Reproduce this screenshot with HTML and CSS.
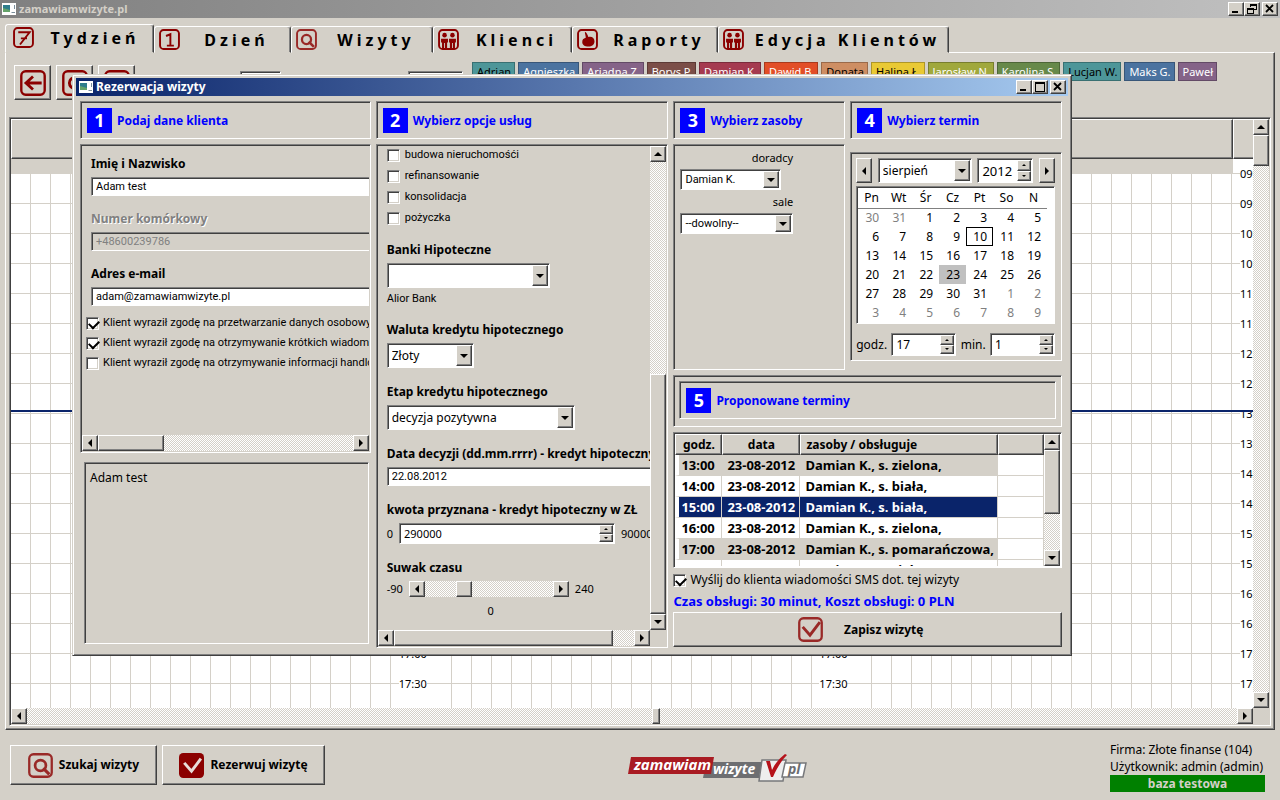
FILE: index.html
```html
<!DOCTYPE html>
<html lang="pl">
<head>
<meta charset="utf-8">
<title>zamawiamwizyte.pl</title>
<link rel="stylesheet" href="styles.css">
</head>
<body>
<svg class="defs" aria-hidden="true">
  <symbol id="frame" viewBox="0 0 24 24"><rect x="1.2" y="1.2" width="21.6" height="21.6" rx="4" fill="none" stroke="currentColor" stroke-width="2.2"/></symbol>
  <symbol id="seven" viewBox="0 0 24 24"><use href="#frame"/><path d="M6 6h13L8 20M9 13h7" fill="none" stroke="currentColor" stroke-width="2.2"/></symbol>
  <symbol id="one" viewBox="0 0 24 24"><use href="#frame"/><path d="M8 8l5-2v13M9 19h8" fill="none" stroke="currentColor" stroke-width="2.2"/></symbol>
  <symbol id="lens" viewBox="0 0 24 24"><use href="#frame"/><circle cx="12" cy="12" r="5.2" fill="none" stroke="currentColor" stroke-width="2.6"/><path d="M14.5 14.5l6 6" stroke="currentColor" stroke-width="3"/></symbol>
  <symbol id="people" viewBox="0 0 24 24"><use href="#frame"/><g fill="currentColor"><circle cx="7.500" cy="7" r="2.600"/><circle cx="16.500" cy="7" r="2.600"/><path d="M3.500 11h7.900v4.500h-1V22H8v-6H7v6H4.600v-6.500H3.500zM12.600 11h7.900v4.500h-1.100V22H17v-6h-1v6h-2.400v-6.500h-1z"/></g></symbol>
  <symbol id="hand" viewBox="0 0 24 24"><use href="#frame"/><path d="M9 3c2 1 3 3 4 6 4-1 7 1 7 5s-3 6-7 6-7-2-7-5 1-4 4-5c0-3-1-4-1-7z" fill="currentColor"/></symbol>
  <symbol id="back" viewBox="0 0 24 24"><use href="#frame"/><path d="M20 12H6M12 6l-6.5 6 6.5 6" fill="none" stroke="currentColor" stroke-width="2.6"/></symbol>
  <symbol id="tick" viewBox="0 0 24 24"><use href="#frame"/><path d="M4.5 9.5l7 8L21 5" fill="none" stroke="currentColor" stroke-width="2.8"/></symbol>
  <symbol id="tickfill" viewBox="0 0 24 24"><rect width="24" height="24" rx="4" fill="currentColor"/><path d="M5 9.5l7 8L21 5.5" fill="none" stroke="#e8dcd8" stroke-width="2.8"/></symbol>
  <symbol id="app" viewBox="0 0 14 12"><rect width="14" height="12" fill="#fff"/><rect x="1" y="2" width="7" height="7" fill="#2e7d8c"/><path d="M1 9V5l7 2v2z" fill="#65a36a"/><path d="M9.5 9.5h3.500M12.500 2v4" stroke="#7b8f9c"/></symbol>
  <symbol id="left" viewBox="0 0 8 8"><path d="M6 0v8L2 4z"/></symbol>
  <symbol id="right" viewBox="0 0 8 8"><path d="M2 0v8l4-4z"/></symbol>
  <symbol id="up" viewBox="0 0 8 8"><path d="M0 6h8L4 2z"/></symbol>
  <symbol id="down" viewBox="0 0 8 8"><path d="M0 2h8L4 6z"/></symbol>
  <symbol id="min" viewBox="0 0 10 10"><path d="M1 7h6v2H1z"/></symbol>
  <symbol id="max" viewBox="0 0 10 10"><path d="M0 0h10v10H0zM1 2v7h8V2z" fill-rule="evenodd"/></symbol>
  <symbol id="restore" viewBox="0 0 10 10"><path d="M3 0h7v6H7V5h2V2H4v1H3zM0 4h7v6H0zM1 6v3h5V6z" fill-rule="evenodd"/></symbol>
  <symbol id="close" viewBox="0 0 10 10"><path d="M1 1l7 7M8 1L1 8" stroke="#000" stroke-width="1.8"/></symbol>
</svg>

<header class="titlebar titlebar-off">
  <svg class="app-icon"><use href="#app"/></svg><span class="title">zamawiamwizyte.pl</span>
  <span class="winbtns">
    <button class="raised wb" aria-label="Minimalizuj"><svg><use href="#min"/></svg></button><button class="raised wb" aria-label="Przywróć"><svg><use href="#restore"/></svg></button>
    <button class="raised wb wb-close" aria-label="Zamknij"><svg><use href="#close"/></svg></button>
  </span>
</header>

<nav class="tabs">
  <button class="tab tab-on"><svg><use href="#seven"/></svg><span>Tydzień</span></button>
  <button class="tab tab-b"><svg><use href="#one"/></svg><span>Dzień</span></button>
  <button class="tab tab-c"><svg class="soft"><use href="#lens"/></svg><span>Wizyty</span></button>
  <button class="tab tab-d"><svg><use href="#people"/></svg><span>Klienci</span></button>
  <button class="tab tab-e"><svg><use href="#hand"/></svg><span>Raporty</span></button>
  <button class="tab tab-f"><svg><use href="#people"/></svg><span>Edycja Klientów</span></button>
</nav>

<main class="page">
  <div class="toolbar">
    <button class="raised tool" aria-label="Wstecz"><svg><use href="#back"/></svg></button>
    <button class="raised tool" aria-label="Szukaj"><svg><use href="#lens"/></svg></button>
    <button class="raised tool" aria-label="Zatwierdź"><svg><use href="#tick"/></svg></button>
    <input class="sunken field tool-a" aria-label="Tydzień"><input class="sunken field tool-b" aria-label="Rok">
    <div class="chips">
      <span class="chip teal">Adrian</span><span class="chip blue">Agnieszka</span><span class="chip violet">Ariadna Z.</span><span class="chip brown">Borys P.</span><span class="chip wine">Damian K.</span><span class="chip orange">Dawid B.</span><span class="chip tan">Donata</span><span class="chip yellow">Halina Ł.</span><span class="chip olive">Jarosław N.</span><span class="chip green">Karolina S.</span><span class="chip teal">Lucjan W.</span><span class="chip blue">Maks G.</span><span class="chip violet">Paweł</span>
    </div>
  </div>
  <section class="sunken planner">
    <div class="planner-view">
      <div class="days">
        <div class="day"><div class="day-head"></div><div class="strip"></div><div class="cells"></div></div>
        <div class="times"><div class="day-head"></div><ul class="hours" data-times></ul></div>
        <div class="day"><div class="day-head"></div><div class="strip"></div><div class="cells"></div></div>
        <div class="times"><div class="day-head"></div><ul class="hours" data-times></ul></div>
        <div class="day"><div class="day-head"></div><div class="strip"></div><div class="cells"></div></div>
        <div class="times times-last"><div class="day-head"></div><ul class="hours" data-times></ul></div>
        <div class="now"></div>
      </div>
      <div class="vbar"><button class="raised sb" aria-label="W górę"><svg><use href="#up"/></svg></button><div class="raised thumb-main"></div><div class="grow"></div><button class="raised sb" aria-label="W dół"><svg><use href="#down"/></svg></button></div>
    </div>
    <div class="hrow"><div class="hbar"><button class="raised sb" aria-label="W lewo"><svg><use href="#left"/></svg></button><div class="before"></div><div class="raised thumb-slim"></div><div class="after"></div><button class="raised sb" aria-label="W prawo"><svg><use href="#right"/></svg></button></div><div class="corner"></div></div>
  </section>
</main>

<footer class="footer">
  <button class="raised big"><svg class="soft"><use href="#lens"/></svg>Szukaj wizyty</button>
  <button class="raised big big-wide"><svg><use href="#tickfill"/></svg>Rezerwuj wizytę</button>
  <svg class="logo" viewBox="0 0 180 30" role="img" aria-label="zamawiamwizyte.pl">
    <path d="M78 8h56l-3 16H75z" fill="#6d6e71"/>
    <path d="M3 3h83l-3 17H0z" fill="#a91b22"/>
    <text x="6" y="16" fill="#fff" font-size="15">zamawiam</text>
    <text x="85" y="20" fill="#fff" font-size="14">wizyte</text>
    <path d="M134 6h24l-3 21h-24z" fill="#eee" stroke="#77787b" stroke-width="1.5"/>
    <path d="M157 9h21l-3 14h-21z" fill="#fff" stroke="#77787b" stroke-width="1.5"/>
    <path d="M138 7h4l2 9C147 9 152 4 157 0l2 1c-6 6-10 13-14 22h-2z" fill="#b5121b"/>
    <text x="160" y="20" fill="#6d6e71" font-size="14">pl</text>
  </svg>
  <div class="account"><div>Firma: Złote finanse (104)</div><div>Użytkownik: admin (admin)</div><strong>baza testowa</strong></div>
</footer>

<div class="dialog" role="dialog" aria-labelledby="dlg-title">
  <div class="titlebar">
    <svg class="app-icon"><use href="#app"/></svg><span class="title" id="dlg-title">Rezerwacja wizyty</span>
    <span class="winbtns">
      <button class="raised wb" aria-label="Minimalizuj"><svg><use href="#min"/></svg></button><button class="raised wb" aria-label="Maksymalizuj"><svg><use href="#max"/></svg></button>
      <button class="raised wb wb-close" aria-label="Zamknij"><svg><use href="#close"/></svg></button>
    </span>
  </div>
  <div class="dialog-body">
    <div class="col col-client">
      <h2 class="sunken step"><span class="num">1</span>Podaj dane klienta</h2>
      <section class="sunken client">
        <div class="clip client-form">
          <div class="group"><label class="cap" for="name">Imię i Nazwisko</label><input class="sunken field long" id="name" value="Adam test"></div>
          <div class="group off"><label class="cap" for="phone">Numer komórkowy</label><input class="sunken field long" id="phone" value="+48600239786" disabled></div>
          <div class="group"><label class="cap" for="mail">Adres e-mail</label><input class="sunken field long" id="mail" value="adam@zamawiamwizyte.pl"></div>
          <div class="consents">
            <label class="check"><input type="checkbox" checked>Klient wyraził zgodę na przetwarzanie danych osobowych</label>
            <label class="check"><input type="checkbox" checked>Klient wyraził zgodę na otrzymywanie krótkich wiadomości</label>
            <label class="check"><input type="checkbox">Klient wyraził zgodę na otrzymywanie informacji handlowych</label>
          </div>
        </div>
        <div class="hbar"><button class="raised sb" aria-label="W lewo"><svg><use href="#left"/></svg></button><div class="raised thumb-client"></div><div class="grow"></div><button class="raised sb" aria-label="W prawo"><svg><use href="#right"/></svg></button></div>
      </section>
      <div class="sunken summary">Adam test</div>
    </div>

    <div class="col col-service">
      <h2 class="sunken step"><span class="num">2</span>Wybierz opcje usług</h2>
      <section class="sunken service">
        <div class="service-top">
          <div class="clip options">
            <div class="kinds">
              <label class="check"><input type="checkbox">budowa nieruchomośći</label>
              <label class="check"><input type="checkbox">refinansowanie</label>
              <label class="check"><input type="checkbox">konsolidacja</label>
              <label class="check"><input type="checkbox">pożyczka</label>
            </div>
            <div class="group"><label class="cap" for="bank">Banki Hipoteczne</label><span class="sunken combo tall w-bank"><select id="bank"><option></option></select><span class="raised arrow"><svg><use href="#down"/></svg></span></span><span class="small">Alior Bank</span></div>
            <div class="group"><label class="cap" for="cur">Waluta kredytu hipotecznego</label><span class="sunken combo tall w-cur"><select id="cur"><option>Złoty</option></select><span class="raised arrow"><svg><use href="#down"/></svg></span></span></div>
            <div class="group"><label class="cap" for="stage">Etap kredytu hipotecznego</label><span class="sunken combo tall w-stage"><select id="stage"><option>decyzja pozytywna</option></select><span class="raised arrow"><svg><use href="#down"/></svg></span></span></div>
            <div class="group"><label class="cap" for="date">Data decyzji (dd.mm.rrrr) - kredyt hipoteczny</label><input class="sunken field long" id="date" value="22.08.2012"></div>
            <div class="group"><label class="cap" for="amount">kwota przyznana - kredyt hipoteczny w ZŁ</label>
              <div class="range"><span>0</span><span class="sunken spin w-amount"><input id="amount" value="290000"><span class="steps"><button class="raised" aria-label="Więcej"><svg><use href="#up"/></svg></button><button class="raised" aria-label="Mniej"><svg><use href="#down"/></svg></button></span></span><span>9000000</span></div></div>
            <div class="group"><span class="cap">Suwak czasu</span>
              <div class="range"><span>-90</span><div class="hbar slider"><button class="raised sb" aria-label="Wcześniej"><svg><use href="#left"/></svg></button><div class="slide-a"></div><div class="raised slide-thumb"></div><div class="grow"></div><button class="raised sb" aria-label="Później"><svg><use href="#right"/></svg></button></div><span>240</span></div>
              <output class="zero">0</output></div>
          </div>
          <div class="vbar"><button class="raised sb" aria-label="W górę"><svg><use href="#up"/></svg></button><div class="grow"></div><div class="raised thumb-service"></div><button class="raised sb" aria-label="W dół"><svg><use href="#down"/></svg></button></div>
        </div>
        <div class="hrow"><div class="hbar"><button class="raised sb" aria-label="W lewo"><svg><use href="#left"/></svg></button><div class="raised thumb-wide"></div><div class="grow"></div><button class="raised sb" aria-label="W prawo"><svg><use href="#right"/></svg></button></div><div class="corner"></div></div>
      </section>
    </div>

    <div class="right">
      <div class="pair">
        <div class="col">
          <h2 class="sunken step"><span class="num">3</span>Wybierz zasoby</h2>
          <section class="sunken resources">
            <div class="res"><label for="adv">doradcy</label><span class="sunken combo w-adv"><select id="adv"><option>Damian K.</option></select><span class="raised arrow"><svg><use href="#down"/></svg></span></span></div>
            <div class="res"><label for="room">sale</label><span class="sunken combo w-room"><select id="room"><option>--dowolny--</option></select><span class="raised arrow"><svg><use href="#down"/></svg></span></span></div>
          </section>
        </div>
        <div class="col col-date">
          <h2 class="sunken step"><span class="num">4</span>Wybierz termin</h2>
          <section class="sunken picker">
            <div class="picker-nav">
              <button class="raised nav" aria-label="Poprzedni miesiąc"><svg><use href="#left"/></svg></button>
              <span class="sunken combo tall w-month"><select aria-label="Miesiąc"><option>sierpień</option></select><span class="raised arrow"><svg><use href="#down"/></svg></span></span>
              <span class="sunken spin big-spin w-year"><input aria-label="Rok" value="2012"><span class="steps"><button class="raised" aria-label="Więcej"><svg><use href="#up"/></svg></button><button class="raised" aria-label="Mniej"><svg><use href="#down"/></svg></button></span></span>
              <button class="raised nav" aria-label="Następny miesiąc"><svg><use href="#right"/></svg></button>
            </div>
            <div class="sunken month"><table>
              <thead><tr><th>Pn</th><th>Wt</th><th>Śr</th><th>Cz</th><th>Pt</th><th>So</th><th>N</th></tr></thead>
              <tbody>
              <tr><td class="out">30</td><td class="out">31</td><td>1</td><td>2</td><td>3</td><td>4</td><td>5</td></tr>
              <tr><td>6</td><td>7</td><td>8</td><td>9</td><td class="today">10</td><td>11</td><td>12</td></tr>
              <tr><td>13</td><td>14</td><td>15</td><td>16</td><td>17</td><td>18</td><td>19</td></tr>
              <tr><td>20</td><td>21</td><td>22</td><td class="sel">23</td><td>24</td><td>25</td><td>26</td></tr>
              <tr><td>27</td><td>28</td><td>29</td><td>30</td><td>31</td><td class="out">1</td><td class="out">2</td></tr>
              <tr><td class="out">3</td><td class="out">4</td><td class="out">5</td><td class="out">6</td><td class="out">7</td><td class="out">8</td><td class="out">9</td></tr>
              </tbody></table></div>
            <div class="clock">
              <label for="hh">godz.</label><span class="sunken spin w-time"><input id="hh" value="17"><span class="steps"><button class="raised" aria-label="Więcej"><svg><use href="#up"/></svg></button><button class="raised" aria-label="Mniej"><svg><use href="#down"/></svg></button></span></span>
              <label for="mm">min.</label><span class="sunken spin w-time"><input id="mm" value="1"><span class="steps"><button class="raised" aria-label="Więcej"><svg><use href="#up"/></svg></button><button class="raised" aria-label="Mniej"><svg><use href="#down"/></svg></button></span></span>
            </div>
          </section>
        </div>
      </div>
      <div class="sunken proposals"><h2 class="sunken step"><span class="num">5</span>Proponowane terminy</h2></div>
      <div class="sunken slots">
        <div class="slots-view"><table>
          <colgroup><col class="c-hour"><col class="c-day"><col class="c-res"><col></colgroup>
          <thead><tr><th class="raised">godz.</th><th class="raised">data</th><th class="raised lead">zasoby / obsługuje</th><th class="raised"></th></tr></thead>
          <tbody>
          <tr class="shade"><td>13:00</td><td>23-08-2012</td><td>Damian K., s. zielona,</td><td></td></tr>
          <tr><td>14:00</td><td>23-08-2012</td><td>Damian K., s. biała,</td><td></td></tr>
          <tr class="picked"><td>15:00</td><td>23-08-2012</td><td>Damian K., s. biała,</td><td></td></tr>
          <tr><td>16:00</td><td>23-08-2012</td><td>Damian K., s. zielona,</td><td></td></tr>
          <tr class="shade"><td>17:00</td><td>23-08-2012</td><td>Damian K., s. pomarańczowa,</td><td></td></tr>
          <tr><td>18:00</td><td>23-08-2012</td><td>Damian K., s. zielona,</td><td></td></tr>
          </tbody></table></div>
        <div class="vbar"><button class="raised sb" aria-label="W górę"><svg><use href="#up"/></svg></button><div class="raised thumb-slots"></div><div class="grow"></div><button class="raised sb" aria-label="W dół"><svg><use href="#down"/></svg></button></div>
      </div>
      <label class="check sms"><input type="checkbox" checked>Wyślij do klienta wiadomości SMS dot. tej wizyty</label>
      <p class="cost">Czas obsługi: 30 minut, Koszt obsługi: 0 PLN</p>
      <button class="raised save"><svg class="soft"><use href="#tick"/></svg><span>Zapisz wizytę</span></button>
    </div>
  </div>
</div>
<script src="script.js"></script>
</body>
</html>
```
FILE: script.js
```js
// Half-hour labels of the planner, 09:00 to 17:30.
document.querySelectorAll('[data-times]').forEach(function (list) {
  for (let i = 0; i < 18; i++) {
    const item = document.createElement('li');
    const label = document.createElement('span');
    label.textContent = String(9 + Math.floor(i / 2)).padStart(2, '0') + (i % 2 ? ':30' : ':00');
    item.appendChild(label);
    list.appendChild(item);
  }
});
```
FILE: styles.css
```css
* { box-sizing: border-box; }
:root { --face: #d4d0c8; --shadow: #808080; --dark: #404040; --red: #8b0000; --ink: #0000ff; --narrow: Roboto, "Noto Sans", sans-serif; }
body {
  margin: 0; height: 100vh; overflow: hidden; display: flex; flex-direction: column;
  background: var(--face); color: #000; font-family: "Noto Sans", "Open Sans", sans-serif; font-size: 12px; line-height: 16px;
}
.defs { position: absolute; width: 0; height: 0; }
button, input, select { font: inherit; color: inherit; margin: 0; padding: 0; border-radius: 0; }
button { background: var(--face); display: flex; align-items: center; justify-content: center; border: 0; }
h2, p, ul { margin: 0; padding: 0; }
svg { flex: none; display: block; }
table { border-collapse: collapse; table-layout: fixed; width: 100%; }
.raised { background: var(--face); border: 1px solid; border-color: #fff var(--dark) var(--dark) #fff; box-shadow: inset -1px -1px var(--shadow); }
.sunken { border: 1px solid; border-color: var(--shadow) #fff #fff var(--shadow); box-shadow: inset 1px 1px var(--dark); }
.grow { flex: 1; }
.soft { opacity: .8; }

.titlebar { display: flex; align-items: center; height: 18px; flex: none; padding: 0 2px 0 3px; background: linear-gradient(90deg, #0a246a, #a6caf0); color: #fff; font-weight: 700; font-size: 12px; }
.titlebar-off { background: linear-gradient(90deg, #808080, #c0c0c0); color: var(--face); padding: 0 2px; font-size: 11px; }
.app-icon { width: 14px; height: 12px; margin-right: 3px; }
.title { flex: 1; }
.winbtns { display: flex; }
.wb { width: 16px; height: 14px; }
.wb svg { width: 10px; height: 10px; }
.wb-close { margin-left: 2px; }

.tabs { display: flex; align-items: flex-end; height: 35px; flex: none; padding: 0 5px; margin-bottom: -1px; position: relative; }
.tab { height: 27px; border: 1px solid; border-color: #fff var(--dark) transparent #fff; border-radius: 3px 3px 0 0; box-shadow: inset -1px 0 var(--shadow); justify-content: flex-start; padding-left: 4px; font-size: 16px; font-weight: 700; letter-spacing: 4px; }
.tab svg { width: 21px; height: 21px; color: var(--red); }
.tab span { flex: 1; text-align: center; white-space: nowrap; padding-left: 3px; }
.tab-on { width: 149px; height: 29px; padding-left: 7px; padding-bottom: 2px; }
.tab-b { width: 137px; } .tab-c { width: 142px; } .tab-d { width: 139px; } .tab-e { width: 146px; } .tab-f { width: 231px; }

.page { flex: 1; min-height: 0; display: flex; flex-direction: column; margin: 0 5px; padding: 0 3px 3px; border: 1px solid; border-color: #fff var(--dark) var(--dark) #fff; box-shadow: inset -1px -1px var(--shadow); }
.toolbar { display: flex; height: 64px; flex: none; padding: 9px 0 0 5px; gap: 5px; align-items: flex-start; }
.tool { width: 37px; height: 35px; margin-top: 3px; }
.tool svg { width: 26px; height: 26px; color: var(--red); }
.tool-a { width: 41px; margin: 9px 0 0 100px; }
.tool-b { width: 55px; margin: 9px 0 0 122px; }
.chips { display: flex; gap: 3px; margin-left: 4px; }
.chip { height: 19px; padding: 0 3px 0 4px; border: 1px solid rgba(0,0,0,.25); line-height: 18px; font-size: 11px; white-space: nowrap; color: #fff; }
.teal { background: #4d9699; color: #000; } .blue { background: #4b73a0; } .violet { background: #856388; } .brown { background: #7b4e48; }
.wine { background: #a53a50; } .orange { background: #e24e27; } .tan { background: #ce8e63; color: #000; } .yellow { background: #e9c934; color: #000; }
.olive { background: #a0a83c; } .green { background: #67894a; }

.planner { flex: 1; min-height: 0; display: flex; flex-direction: column; padding: 1px; }
.planner-view { flex: 1; min-height: 0; display: flex; }
.days { flex: 1; min-width: 0; display: flex; overflow: hidden; background: #fff; position: relative; }
.day { flex: 381; display: flex; flex-direction: column; min-width: 0; }
.times { flex: 40; min-width: 0; }
.times-last { flex: 20; overflow: hidden; }
.day-head { height: 40px; flex: none; background: var(--face); border: 1px solid; border-color: #fff var(--dark) var(--dark) #fff; box-shadow: inset -1px -1px var(--shadow); }
.times-last .day-head { border-right: 0; box-shadow: inset 0 -1px var(--shadow); }
.strip { height: 14px; background: var(--face); }
.cells { flex: 1; background: linear-gradient(var(--face) 1px, transparent 1px) 0 0 / 100% 30px, linear-gradient(90deg, transparent 19px, var(--face) 19px) 0 0 / 20px 100%; }
.hours { list-style: none; font-size: 11px; line-height: 30px; }
.hours li { height: 30px; background: linear-gradient(var(--face), var(--face)) 0 14px / 100% 1px no-repeat; padding-left: 7px; }
.hours span { background: #fff; }
.now { position: absolute; left: 0; right: 0; top: 291px; height: 2px; background: #0a246a; }

.vbar, .hbar { display: flex; background: repeating-conic-gradient(#fff 0 25%, var(--face) 0 50%) 0 0 / 2px 2px; }
.vbar { width: 16px; flex: none; flex-direction: column; }
.hbar { height: 16px; flex: 1 0 auto; }
.hrow { display: flex; flex: none; }
.corner { width: 16px; background: var(--face); }
.sb { width: 16px; height: 16px; flex: none; }
.sb svg, .arrow svg, .nav svg { width: 8px; height: 8px; }
.before { flex: 13; } .after { flex: 12; }
.thumb-main { height: 31px; } .thumb-slim { width: 8px; } .thumb-client { width: 66px; }
.thumb-service { height: 240px; } .thumb-wide { width: 219px; } .thumb-slots { height: 64px; }

.footer { display: flex; flex: none; height: 70px; padding: 15px 15px 0 10px; gap: 5px; align-items: flex-start; }
.big { width: 147px; height: 40px; gap: 6px; font-weight: 700; font-size: 12px; white-space: nowrap; }
.big-wide { width: 163px; }
.big svg, .save svg { width: 25px; height: 25px; color: var(--red); }
.logo { width: 180px; height: 30px; margin: 9px auto 0 298px; font-family: "Open Sans", sans-serif; font-weight: 700; font-style: italic; }
.account { width: 155px; margin-top: -4px; font-size: 12px; line-height: 17px; white-space: nowrap; }
.account strong { display: block; background: #008000; color: var(--face); text-align: center; line-height: 17px; font-size: 12px; }

.dialog { position: absolute; left: 72px; right: 208px; top: 74px; min-height: 582px; padding: 3px; display: flex; flex-direction: column; background: var(--face); border: 1px solid; border-color: var(--face) var(--dark) var(--dark) var(--face); box-shadow: inset 1px 1px #fff, inset -1px -1px var(--shadow); }
.dialog-body { flex: 1; display: flex; gap: 5px; padding: 5px 6px 4px 4px; }
.col { display: flex; flex-direction: column; gap: 5px; min-width: 0; }
.col-client { flex: 291; } .col-service { flex: 293; } .right { flex: 389; display: flex; flex-direction: column; min-width: 0; }
.step { display: flex; align-items: center; gap: 5px; height: 38px; flex: none; padding: 1px 6px 0; color: var(--ink); font-size: 12px; font-weight: 700; white-space: nowrap; }
.num { width: 25px; height: 25px; background: var(--ink); color: #fff; text-align: center; line-height: 25px; font-size: 18px; }
.client { height: 309px; display: flex; flex-direction: column; padding: 1px; }
.client .hbar { flex: none; }
.clip { overflow: hidden; white-space: nowrap; min-width: 0; }
.client-form { flex: 1; padding: 9px 0 0 9px; }
.group { display: flex; flex-direction: column; align-items: flex-start; gap: 4px; margin-bottom: 15px; }
.options .group:last-child { margin-bottom: 0; }
.client-form .group { margin-bottom: 14px; }
.cap { font-weight: 700; font-size: 12px; line-height: 18px; }
.off .cap { color: var(--shadow); text-shadow: 1px 1px #fff; }
.field { background: #fff; height: 19px; padding: 0 4px; font-family: var(--narrow); font-size: 11px; outline: 0; }
.field:disabled { background: var(--face); color: var(--shadow); }
.long { width: 320px; }
.consents { display: flex; flex-direction: column; margin: -7px 0 0 -5px; }
.check { display: flex; align-items: center; gap: 4px; height: 20px; font-family: var(--narrow); font-size: 11px; }
.check input { appearance: none; width: 13px; height: 13px; flex: none; background: #fff; border: 1px solid; border-color: var(--shadow) #fff #fff var(--shadow); box-shadow: inset 1px 1px var(--dark), inset -1px -1px var(--face); position: relative; }
.check input:checked::after { content: ""; position: absolute; left: 2px; top: 2px; width: 8px; height: 5px; border: solid #000; border-width: 0 0 2px 2px; transform: rotate(-45deg); }
.summary { flex: 1; margin: 4px 2px 4px 4px; padding: 7px 5px; font-size: 12px; }

.service { flex: 1; display: flex; flex-direction: column; padding: 1px; min-height: 0; }
.service-top { flex: 1; display: flex; min-height: 0; }
.options { flex: 1; padding-left: 9px; }
.kinds { display: flex; flex-direction: column; gap: 3px; margin-bottom: 14px; }
.kinds .check { height: 18px; gap: 5px; }
.small { font-family: var(--narrow); font-size: 11px; line-height: 14px; }
.combo { display: block; position: relative; height: 21px; background: #fff; padding: 1px; font-family: var(--narrow); font-size: 11px; }
.combo select { appearance: none; border: 0; background: none; width: 100%; height: 100%; padding: 0 18px 0 3px; outline: 0; display: block; }
.arrow { position: absolute; right: 1px; top: 1px; bottom: 1px; width: 16px; display: flex; align-items: center; justify-content: center; pointer-events: none; }
.tall { height: 25px; font-family: inherit; font-size: 12px; }
.w-bank { width: 163px; } .w-cur { width: 87px; } .w-stage { width: 188px; } .w-adv { width: 101px; } .w-room { width: 113px; } .w-month { width: 94px; }
.w-amount { width: 216px; } .w-year { width: 56px; } .w-time { width: 65px; }
.spin { display: flex; height: 21px; background: #fff; padding: 1px; flex: none; }
.spin input { flex: 1; width: 0; border: 0; background: none; padding-left: 3px; outline: 0; }
.steps { width: 14px; display: flex; flex-direction: column; }
.steps button { flex: 1; min-height: 0; }
.steps svg { width: 4px; height: 4px; }
.range { display: flex; align-items: center; gap: 6px; font-size: 11px; }
.slider { width: 160px; flex: none; }
.slide-a { width: 31px; } .slide-thumb { width: 16px; }
.zero { width: 208px; text-align: center; line-height: 20px; font-size: 11px; }

.pair { display: flex; gap: 5px; }
.pair .col { flex: 172; }
.pair .col-date { flex: 212; gap: 13px; }
.resources { height: 226px; padding: 5px 51px 0 6px; }
.res { display: flex; flex-direction: column; align-items: flex-start; gap: 3px; margin-bottom: 4px; font-size: 11px; }
.res label { align-self: flex-end; }
.picker { padding: 5px 6px 4px 5px; }
.picker-nav { display: flex; justify-content: space-between; margin-bottom: 3px; }
.nav { width: 16px; height: 25px; }
.big-spin { height: 25px; font-size: 13px; }
.month { background: #fff; padding: 1px 7px 1px 1px; font-size: 12px; }
.month th { font-weight: 400; height: 20px; border-bottom: 1px solid var(--shadow); padding: 0; text-align: center; }
.month td { height: 19px; line-height: 18px; padding: 0 6px 0 0; text-align: right; }
.out { color: var(--shadow); }
.today { outline: 1px solid #000; outline-offset: -1px; }
.sel { background: #c0c0c0; }
.clock { display: flex; align-items: center; justify-content: space-between; margin-top: 9px; font-size: 12px; }
.clock .spin { height: 23px; }

.proposals { margin-top: 5px; padding: 5px 5px 7px; }
.slots { display: flex; height: 136px; margin-top: 5px; padding: 1px; background: #fff; }
.slots-view { flex: 1; min-width: 0; overflow: hidden; }
.slots table { font-weight: 700; font-size: 13px; border-collapse: separate; border-spacing: 0; }
.c-hour { width: 47px; } .c-day { width: 78px; } .c-res { width: 198px; }
.slots th { height: 21px; padding: 0; line-height: 16px; text-align: center; font-size: 12px; }
.slots .lead { text-align: left; padding-left: 5px; }
.slots td { height: 21px; padding: 0 0 0 5px; border: solid var(--face); border-width: 0 1px 1px 0; white-space: nowrap; line-height: 20px; }
.slots .shade td:not(:last-child) { background: var(--face); }
.slots .picked td:not(:last-child) { background: #0a246a; color: #fff; }
.slots tbody td:first-child { border-left: 4px solid #fff; padding-left: 2px; }
.sms { font-family: inherit; font-size: 12px; margin-top: 2px; height: 20px; white-space: nowrap; }
.cost { color: var(--ink); font-weight: 700; font-size: 13px; line-height: 18px; margin: 2px 0; white-space: nowrap; }
.save { height: 35px; gap: 21px; font-weight: 700; font-size: 12px; padding-right: 14px; }
```
